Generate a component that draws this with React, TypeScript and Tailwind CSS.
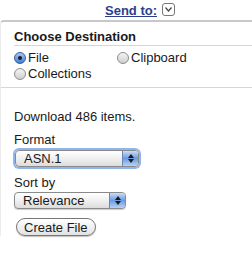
import React from 'react';

const Radio: React.FC<{ checked?: boolean; label: string }> = ({ checked, label }) => (
  <label className="flex items-center gap-[2px]">
    <span
      className={
        checked
          ? 'w-[12px] h-[12px] rounded-full border border-[#3a5d9c] bg-gradient-to-b from-[#a9c8ee] to-[#3f7fd4] flex items-center justify-center'
          : 'w-[12px] h-[12px] rounded-full border border-[#8c8c8c] bg-gradient-to-b from-[#f4f4f4] to-[#d0d0d0]'
      }
    >
      {checked && <span className="w-[4px] h-[4px] rounded-full bg-[#1a1a2a]" />}
    </span>
    <span>{label}</span>
  </label>
);

const Stepper: React.FC = () => (
  <span className="w-[16px] self-stretch rounded-r-[4px] border-l border-[#6b86b8] bg-gradient-to-b from-[#c9dcf6] via-[#6a9be0] to-[#b8d2f4] flex flex-col items-center justify-center gap-[1px]">
    <svg width="6" height="4" viewBox="0 0 6 4"><path d="M3 0L6 4H0z" fill="#1a1a1a" /></svg>
    <svg width="6" height="4" viewBox="0 0 6 4"><path d="M0 0H6L3 4z" fill="#1a1a1a" /></svg>
  </span>
);

const Select: React.FC<{ value: string; width: string; focused?: boolean }> = ({ value, width, focused }) => (
  <div
    className={`${width} h-[17px] flex items-stretch rounded-[4px] border border-[#8a8a8a] bg-gradient-to-b from-[#ffffff] via-[#f0f0f0] to-[#dcdcdc] ${
      focused ? 'shadow-[0_0_0_2px_#8fb5ea]' : 'shadow-[0_1px_1px_rgba(0,0,0,0.2)]'
    }`}
  >
    <span className="flex-1 pl-[8px] leading-[15px] text-[13px]">{value}</span>
    <Stepper />
  </div>
);

export default function App() {
  return (
    <div className="w-[252px] h-[254px] bg-white text-[13px] text-[#1a1a1a] font-['Liberation_Sans',Arial,sans-serif]">
      <div className="h-[20px] flex items-start pt-[3px] pl-[105px] gap-[5px]">
        <a className="font-bold text-[#2b3f8f] underline leading-[15px]">Send to:</a>
        <span className="w-[13px] h-[13px] rounded-[3px] border border-[#777] flex items-center justify-center">
          <svg width="7" height="5" viewBox="0 0 7 5"><path d="M0.5 0.5L3.5 4L6.5 0.5" fill="none" stroke="#444" strokeWidth="1.2" /></svg>
        </span>
      </div>
      <div className="border-t-2 border-l border-t-[#c8c8c8] border-l-[#ececec] rounded-tl-[4px]">
        <div className="pl-[13px] pt-[7px]">
          <div className="font-bold leading-[16px] border-b border-[#d6d6d6]">Choose Destination</div>
          <div className="pt-[4px] pb-[5px] leading-[16px]">
            <div className="flex">
              <div className="w-[103px]"><Radio checked label="File" /></div>
              <Radio label="Clipboard" />
            </div>
            <Radio label="Collections" />
          </div>
        </div>
        <div className="border-t border-[#d6d6d6] pl-[13px] pt-[21px] leading-[16px]">
          <div>Download 486 items.</div>
          <div className="mt-[7px]">Format</div>
          <div className="mt-[2px] pl-[1px]"><Select value="ASN.1" width="w-[124px]" focused /></div>
          <div className="mt-[8px]">Sort by</div>
          <div className="mt-[1px]"><Select value="Relevance" width="w-[112px]" /></div>
          <button className="mt-[9px] ml-[2px] h-[18px] px-[7px] rounded-full border border-[#777] bg-gradient-to-b from-[#ffffff] to-[#e2e2e2] text-[13px] leading-[15px] shadow-[0_1px_1px_rgba(0,0,0,0.25)]">
            Create File
          </button>
        </div>
      </div>
    </div>
  );
}
